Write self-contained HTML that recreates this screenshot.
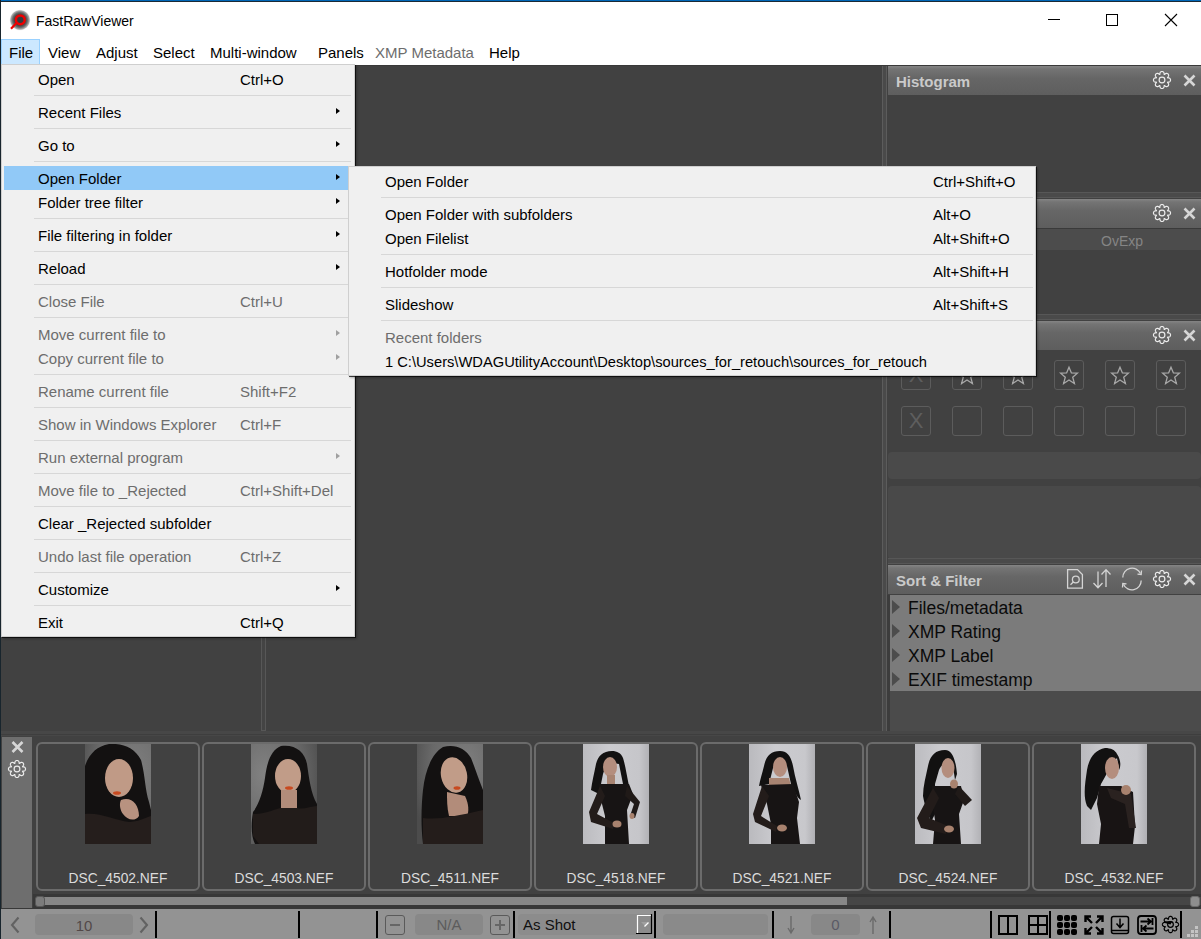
<!DOCTYPE html>
<html><head><meta charset="utf-8">
<style>
*{margin:0;padding:0;box-sizing:border-box}
html,body{width:1201px;height:939px;overflow:hidden;background:#fff;font-family:"Liberation Sans",sans-serif}
.a{position:absolute}
.t{position:absolute;white-space:pre}
#menu .r,#sub .r{position:absolute;margin-top:1px;height:24px;line-height:24px;font-size:15px;color:#000;white-space:pre}
#menu .d,#sub .d{color:#6d6d6d}
.sep{position:absolute;height:1px;background:#d7d7d7}
.arr{position:absolute;width:0;height:0;border-top:3.5px solid transparent;border-bottom:3.5px solid transparent;border-left:4px solid #000}
.arr.d{border-left-color:#a0a0a0}
.hdr{position:absolute;left:888px;width:313px;height:29px;background:linear-gradient(#858585 0,#747474 3px,#666 12px,#5e5e5e 29px)}
.hdr .ti{position:absolute;left:8px;top:1px;line-height:29px;font-size:15px;font-weight:bold;color:#cacaca}
.spl{position:absolute;left:888px;width:313px;height:6px;background:#4a4a4a;border-top:1px solid #575757;border-bottom:1px solid #575757}
.box{position:absolute;width:30px;height:30px;border:1px solid #5c5c5c;border-radius:3px}
.card{position:absolute;top:742px;width:164px;height:149px;border:2px solid #6b6b6b;border-radius:6px;background:#414141}
.card .nm{position:absolute;left:0;width:160px;top:126px;text-align:center;font-size:13.8px;color:#dcdcdc;line-height:18px}
.card svg{position:absolute;left:47px;top:0}
.vb{position:absolute;top:911px;width:3px;height:26px;background:#000}
.fld{position:absolute;height:21px;top:914px;background:#888;border-radius:4px}
</style></head><body>
<!-- window border -->
<div class="a" style="left:0;top:0;width:1201px;height:1px;background:#0067b8"></div>
<div class="a" style="left:0;top:1px;width:1201px;height:1px;background:#1b2a35"></div>
<div class="a" style="left:0;top:0;width:1px;height:939px;background:#18252d"></div>

<!-- title icon -->
<svg class="a" style="left:9px;top:9px" width="22" height="22" viewBox="0 0 22 22">
<defs><radialGradient id="ig" cx="50%" cy="50%" r="50%"><stop offset="0" stop-color="#2e3a42"/><stop offset="0.5" stop-color="#3c3c3c"/><stop offset="0.72" stop-color="#6a6a6a"/><stop offset="0.9" stop-color="#acacac"/><stop offset="1" stop-color="#d8d8d8" stop-opacity="0.5"/></radialGradient></defs>
<circle cx="11" cy="11" r="10.3" fill="url(#ig)"/>
<circle cx="11.3" cy="10.8" r="4.4" fill="none" stroke="#f00000" stroke-width="2.5"/>
<path d="M7.2 14.2 L2 19.8" stroke="#f00000" stroke-width="2.2"/>
</svg>
<div class="t" style="left:36px;top:11px;font-size:14px;line-height:20px;color:#000">FastRawViewer</div>
<!-- window buttons -->
<div class="a" style="left:1048px;top:19px;width:12px;height:1px;background:#000"></div>
<div class="a" style="left:1106px;top:14px;width:12px;height:12px;border:1px solid #000"></div>
<svg class="a" style="left:1164px;top:13px" width="14" height="14" viewBox="0 0 14 14"><path d="M1 1 L13 13 M13 1 L1 13" stroke="#000" stroke-width="1.1"/></svg>

<!-- menubar -->
<div class="a" style="left:1px;top:39px;width:39px;height:26px;background:#cce8ff;border:1px solid #99d1ff"></div>
<div class="t" style="left:9px;top:41px;font-size:15px;line-height:24px;color:#000">File</div>
<div class="t" style="left:48px;top:41px;font-size:15px;line-height:24px;color:#000">View</div>
<div class="t" style="left:96px;top:41px;font-size:15px;line-height:24px;color:#000">Adjust</div>
<div class="t" style="left:153px;top:41px;font-size:15px;line-height:24px;color:#000">Select</div>
<div class="t" style="left:210px;top:41px;font-size:15px;line-height:24px;color:#000">Multi-window</div>
<div class="t" style="left:318px;top:41px;font-size:15px;line-height:24px;color:#000">Panels</div>
<div class="t" style="left:375px;top:41px;font-size:15px;line-height:24px;color:#6d6d6d">XMP Metadata</div>
<div class="t" style="left:489px;top:41px;font-size:15px;line-height:24px;color:#000">Help</div>

<!-- dark main area -->
<div class="a" style="left:1px;top:65px;width:1200px;height:874px;background:#414141"></div>
<div class="a" style="left:1px;top:65px;width:1200px;height:1px;background:#393939"></div>

<!-- left divider -->
<div class="a" style="left:261px;top:66px;width:5px;height:665px;border:1px solid #575757;background:#444"></div>
<!-- right divider -->
<div class="a" style="left:882px;top:66px;width:5px;height:665px;border-left:1px solid #5c5c5c;border-right:1px solid #5c5c5c;background:#4a4a4a"></div>

<!-- right panels -->
<div id="rp">
<div class="hdr" style="top:66px"><div class="ti">Histogram</div></div>
<div class="spl" style="top:192px"></div>
<div class="hdr" style="top:199px"></div>
<div class="a" style="left:888px;top:228px;width:313px;height:22px;background:#4c4c4c"></div>
<div class="a" style="left:888px;top:228px;width:313px;height:1px;background:#3a3a3a"></div>
<div class="t" style="left:1101px;top:231px;font-size:14px;line-height:20px;color:#858585">OvExp</div>
<div class="spl" style="top:314px"></div>
<div class="hdr" style="top:321px"></div>
</div>

<!-- gear icons / close in headers -->
<svg width="0" height="0" style="position:absolute">
<defs>
<g id="gear"><path d="M0.00 -8.55 L0.45 -8.50 L0.88 -8.36 L1.28 -8.11 L1.65 -7.75 L1.94 -7.25 L2.10 -6.46 L2.15 -5.60 L2.44 -5.48 L3.09 -6.05 L3.75 -6.50 L4.32 -6.65 L4.83 -6.64 L5.29 -6.53 L5.70 -6.33 L6.05 -6.05 L6.33 -5.70 L6.53 -5.29 L6.64 -4.83 L6.65 -4.32 L6.50 -3.75 L6.05 -3.09 L5.48 -2.44 L5.60 -2.15 L6.46 -2.10 L7.25 -1.94 L7.75 -1.65 L8.11 -1.28 L8.36 -0.88 L8.50 -0.45 L8.55 -0.00 L8.50 0.45 L8.36 0.88 L8.11 1.28 L7.75 1.65 L7.25 1.94 L6.46 2.10 L5.60 2.15 L5.48 2.44 L6.05 3.09 L6.50 3.75 L6.65 4.32 L6.64 4.83 L6.53 5.29 L6.33 5.70 L6.05 6.05 L5.70 6.33 L5.29 6.53 L4.83 6.64 L4.32 6.65 L3.75 6.50 L3.09 6.05 L2.44 5.48 L2.15 5.60 L2.10 6.46 L1.94 7.25 L1.65 7.75 L1.28 8.11 L0.88 8.36 L0.45 8.50 L0.00 8.55 L-0.45 8.50 L-0.88 8.36 L-1.28 8.11 L-1.65 7.75 L-1.94 7.25 L-2.10 6.46 L-2.15 5.60 L-2.44 5.48 L-3.09 6.05 L-3.75 6.50 L-4.32 6.65 L-4.83 6.64 L-5.29 6.53 L-5.70 6.33 L-6.05 6.05 L-6.33 5.70 L-6.53 5.29 L-6.64 4.83 L-6.65 4.32 L-6.50 3.75 L-6.05 3.09 L-5.48 2.44 L-5.60 2.15 L-6.46 2.10 L-7.25 1.94 L-7.75 1.65 L-8.11 1.28 L-8.36 0.88 L-8.50 0.45 L-8.55 0.00 L-8.50 -0.45 L-8.36 -0.88 L-8.11 -1.28 L-7.75 -1.65 L-7.25 -1.94 L-6.46 -2.10 L-5.60 -2.15 L-5.48 -2.44 L-6.05 -3.09 L-6.50 -3.75 L-6.65 -4.32 L-6.64 -4.83 L-6.53 -5.29 L-6.33 -5.70 L-6.05 -6.05 L-5.70 -6.33 L-5.29 -6.53 L-4.83 -6.64 L-4.32 -6.65 L-3.75 -6.50 L-3.09 -6.05 L-2.44 -5.48 L-2.15 -5.60 L-2.10 -6.46 L-1.94 -7.25 L-1.65 -7.75 L-1.28 -8.11 L-0.88 -8.36 L-0.45 -8.50Z" fill="none" stroke="#ececec" stroke-width="1.15" stroke-linejoin="round"/><circle r="2.9" fill="none" stroke="#ececec" stroke-width="1.15"/></g>
<g id="cls"><path d="M-5 -5 L5 5 M5 -5 L-5 5" stroke="#d6d6d6" stroke-width="2.6"/></g>
<g id="star"><path transform="translate(0.5 1) scale(0.93)" d="M0 -9.5 L2.6 -3.3 L9 -3.1 L4 1.3 L5.8 8 L0 4.3 L-5.8 8 L-4 1.3 L-9 -3.1 L-2.6 -3.3 Z" fill="none" stroke="#a8a8a8" stroke-width="1.4" stroke-linejoin="miter"/></g>
</defs></svg>
<svg class="a" style="left:0;top:0" width="1201" height="939" viewBox="0 0 1201 939">
<use href="#gear" x="1162" y="80"/><use href="#cls" x="1189.5" y="80.5"/>
<use href="#gear" x="1162" y="213"/><use href="#cls" x="1189.5" y="213.5"/>
<use href="#gear" x="1162" y="335"/><use href="#cls" x="1189.5" y="335.5"/>
</svg>

<!-- rating boxes -->
<div class="box" style="left:901px;top:360px"></div>
<div class="box" style="left:952px;top:360px"></div>
<div class="box" style="left:1003px;top:360px"></div>
<div class="box" style="left:1054px;top:360px"></div>
<div class="box" style="left:1105px;top:360px"></div>
<div class="box" style="left:1156px;top:360px"></div>
<div class="box" style="left:901px;top:406px"></div>
<div class="box" style="left:952px;top:406px"></div>
<div class="box" style="left:1003px;top:406px"></div>
<div class="box" style="left:1054px;top:406px"></div>
<div class="box" style="left:1105px;top:406px"></div>
<div class="box" style="left:1156px;top:406px"></div>
<div class="t" style="left:905px;top:406px;width:22px;text-align:center;font-size:22px;line-height:30px;color:#5e5e5e">X</div>
<div class="t" style="left:905px;top:360px;width:22px;text-align:center;font-size:22px;line-height:30px;color:#5e5e5e">X</div>
<svg class="a" style="left:0;top:0" width="1201" height="939" viewBox="0 0 1201 939">
<use href="#star" x="966.5" y="375"/><use href="#star" x="1017.5" y="375"/><use href="#star" x="1068.5" y="375"/><use href="#star" x="1119.5" y="375"/><use href="#star" x="1170.5" y="375"/>
</svg>
<div class="a" style="left:888px;top:452px;width:313px;height:27px;background:#4a4a4a;border-radius:4px"></div>
<div class="a" style="left:888px;top:486px;width:313px;height:73px;background:#494949;border-radius:4px"></div>
<div class="spl" style="top:558px"></div>
<div class="hdr" style="top:565px"><div class="ti">Sort &amp; Filter</div></div>
<div class="a" style="left:887px;top:595px;width:3px;height:136px;background:#3c3c3c"></div>
<div class="a" style="left:890px;top:595px;width:311px;height:96px;background:#7b7b7b"></div>
<div class="a" style="left:890px;top:691px;width:311px;height:40px;background:#4b4b4b"></div>


<!-- sort & filter icons and tree -->
<svg class="a" style="left:0;top:0" width="1201" height="939" viewBox="0 0 1201 939">
<g fill="none" stroke="#d4d4d4" stroke-width="1.3">
<path d="M1067.6 569.6 L1077.5 569.6 L1082.4 574.5 L1082.4 588.1 L1067.6 588.1 Z"/>
<circle cx="1075.8" cy="579.5" r="3.4"/><path d="M1073.3 582 L1070.5 584.8"/>
<path d="M1098 571.5 L1098 587.5 M1093.5 583 L1098 587.8 L1102.5 583"/>
<path d="M1106 587 L1106 569.8 M1101.5 574.5 L1106 569.6 L1110.5 574.5"/>
<path d="M1140.5 573.5 A9.3 9.3 0 0 0 1122.8 577.5"/><path d="M1123.5 584.5 A9.3 9.3 0 0 0 1141.2 580.5"/>
<path d="M1141.5 570.5 L1141.2 574.5 L1137.5 574.2"/><path d="M1122.5 587.5 L1122.8 583.5 L1126.5 583.8"/>
</g>
<use href="#gear" x="1162" y="579"/><use href="#cls" x="1189.5" y="579.5"/>
<g fill="#4c4c4c">
<path d="M892 600 L900 607 L892 614Z"/><path d="M892 624 L900 631 L892 638Z"/><path d="M892 648 L900 655 L892 662Z"/><path d="M892 672 L900 679 L892 686Z"/>
</g>
</svg>
<div class="t" style="left:908px;top:596px;font-size:17.5px;line-height:24px;color:#0a0a0a">Files/metadata</div>
<div class="t" style="left:908px;top:620px;font-size:17.5px;line-height:24px;color:#0a0a0a">XMP Rating</div>
<div class="t" style="left:908px;top:644px;font-size:17.5px;line-height:24px;color:#0a0a0a">XMP Label</div>
<div class="t" style="left:908px;top:668px;font-size:17.5px;line-height:24px;color:#0a0a0a">EXIF timestamp</div>

<!-- horizontal splitter -->
<div class="a" style="left:1px;top:731px;width:1200px;height:5px;background:#474747"></div>
<div class="a" style="left:1px;top:734px;width:1200px;height:1px;background:#3e3e3e"></div>

<!-- filmstrip left toolbar -->
<div class="a" style="left:2px;top:737px;width:30px;height:171px;background:#6e6e6e"></div>
<svg class="a" style="left:0;top:730px" width="40" height="60" viewBox="0 730 40 60"><use href="#cls" x="17.5" y="747"/><use href="#gear" x="17" y="769"/></svg>


<!-- cards -->
<div class="card" style="left:36px"><svg width="66" height="100" viewBox="0 0 66 100"><defs><radialGradient id="pg1" cx="0.75" cy="0.25" r="0.9"><stop offset="0" stop-color="#7e7e7e"/><stop offset="0.6" stop-color="#6c6c6c"/><stop offset="1" stop-color="#4c4c4c"/></radialGradient></defs>
<rect width="66" height="100" fill="url(#pg1)"/>
<path d="M24 0 C38 -1 50 4 56 16 C60 30 60 46 64 58 L66 66 L66 100 L0 100 L0 22 C4 10 12 2 24 0Z" fill="#131111"/>
<ellipse cx="34" cy="34" rx="14" ry="19" fill="#c09a86"/>
<path d="M36 56 C46 52 54 60 54 72 C50 78 42 76 38 70 C35 66 34 60 36 56Z" fill="#b89280"/>
<path d="M0 70 C14 68 30 76 44 78 C52 78 60 74 66 72 L66 100 L0 100Z" fill="#251e1c"/>
<ellipse cx="32" cy="49" rx="4" ry="1.8" fill="#c84a20"/></svg><div class="nm">DSC_4502.NEF</div></div>
<div class="card" style="left:202px"><svg width="66" height="100" viewBox="0 0 66 100"><defs><radialGradient id="pg2" cx="0.2" cy="0.3" r="0.9"><stop offset="0" stop-color="#828282"/><stop offset="0.6" stop-color="#6a6a6a"/><stop offset="1" stop-color="#4e4e4e"/></radialGradient></defs>
<rect width="66" height="100" fill="url(#pg2)"/>
<path d="M30 2 C44 0 54 8 56 20 C58 34 60 50 66 60 L66 100 L4 100 C0 92 0 80 2 68 C8 60 12 48 14 34 C16 18 20 6 30 2Z" fill="#131111"/>
<ellipse cx="37" cy="32" rx="13" ry="17" fill="#c19c88"/>
<rect x="30" y="46" width="16" height="20" fill="#b28c7a"/>
<path d="M2 70 C16 70 26 64 30 64 L46 64 C52 66 60 62 66 62 L66 100 L8 100 L2 92Z" fill="#221c1a"/>
<ellipse cx="38" cy="44" rx="4" ry="1.8" fill="#c84a20"/></svg><div class="nm">DSC_4503.NEF</div></div>
<div class="card" style="left:368px"><svg width="66" height="100" viewBox="0 0 66 100"><defs><radialGradient id="pg3" cx="0.75" cy="0.2" r="0.9"><stop offset="0" stop-color="#7e7e7e"/><stop offset="0.6" stop-color="#686868"/><stop offset="1" stop-color="#4c4c4c"/></radialGradient></defs>
<rect width="66" height="100" fill="url(#pg3)"/>
<path d="M26 3 C38 0 48 4 54 14 C58 24 62 36 66 46 L66 100 L6 100 C4 84 4 64 6 46 C8 28 14 10 26 3Z" fill="#131111"/>
<ellipse cx="37" cy="31" rx="13" ry="18" fill="#c19c88" transform="rotate(-12 37 31)"/>
<path d="M30 48 L48 52 C52 60 52 68 50 72 L32 72 C30 64 30 56 30 48Z" fill="#b28c7a"/>
<path d="M6 74 C22 76 40 72 66 66 L66 100 L6 100Z" fill="#241d1b"/>
<ellipse cx="40" cy="44" rx="3.5" ry="1.8" fill="#c84a20"/></svg><div class="nm">DSC_4511.NEF</div></div>
<div class="card" style="left:534px"><svg width="66" height="100" viewBox="0 0 66 100"><defs><linearGradient id="fg" x1="0" y1="0" x2="1" y2="0"><stop offset="0" stop-color="#bcbcc0"/><stop offset="0.4" stop-color="#cbcbcf"/><stop offset="0.85" stop-color="#c6c6ca"/><stop offset="1" stop-color="#b2b2b6"/></linearGradient></defs>
<rect width="66" height="100" fill="url(#fg)"/>
<path d="M29 7 C20 7 15 12 13 20 C11 30 9 38 8 46 L16 50 L20 30 C22 22 30 18 36 20 L40 40 L46 42 C44 32 42 20 40 14 C38 9 34 7 29 7Z" fill="#121111"/>
<ellipse cx="27" cy="23" rx="7" ry="10" fill="#b48e7e"/>
<rect x="24" y="31" width="8" height="9" fill="#a88472"/>
<path d="M16 40 L46 40 L50 50 L44 66 L46 100 L22 100 L22 72 L18 56Z" fill="#171414"/>
<path d="M17 42 L6 68 L8 78 L30 85 L31 79 L14 70 L22 52Z" fill="#231c1a"/>
<path d="M44 42 L57 58 L52 74 L47 72 L51 60 L42 52Z" fill="#201a18"/>
<ellipse cx="34" cy="80" rx="4.5" ry="3.5" fill="#a8826e"/><ellipse cx="49" cy="72" rx="2.5" ry="3" fill="#a8826e"/></svg><div class="nm">DSC_4518.NEF</div></div>
<div class="card" style="left:700px"><svg width="66" height="100" viewBox="0 0 66 100"><defs><linearGradient id="fg5" x1="0" y1="0" x2="1" y2="0"><stop offset="0" stop-color="#bababe"/><stop offset="0.4" stop-color="#cbcbcf"/><stop offset="0.85" stop-color="#c8c8cc"/><stop offset="1" stop-color="#b0b0b4"/></linearGradient></defs>
<rect width="66" height="100" fill="url(#fg5)"/>
<path d="M31 7 C22 7 17 12 15 22 C13 30 11 36 10 42 L20 40 L24 24 C28 18 34 18 38 22 L42 40 C46 48 48 54 52 56 C50 46 46 34 44 22 C42 12 38 7 31 7Z" fill="#121111"/>
<ellipse cx="31" cy="23" rx="7" ry="10" fill="#b48e7e"/>
<path d="M20 34 L40 34 L42 42 L20 42Z" fill="#a88472"/>
<path d="M12 41 L44 40 L50 58 L48 74 L51 100 L22 100 L22 80 L18 60Z" fill="#171414"/>
<path d="M13 42 L4 70 L6 78 L27 88 L28 82 L12 72 L20 52Z" fill="#231c1a"/>
<ellipse cx="33" cy="84" rx="5" ry="3.5" fill="#a8826e"/></svg><div class="nm">DSC_4521.NEF</div></div>
<div class="card" style="left:866px"><svg width="66" height="100" viewBox="0 0 66 100"><rect width="66" height="100" fill="url(#fg)"/>
<path d="M30 6 C20 6 15 12 13 22 C11 32 8 42 8 52 C10 64 14 72 16 78 L20 70 L20 40 L24 26 C28 18 34 18 38 22 L40 36 L42 30 C41 18 38 6 30 6Z" fill="#121111"/>
<ellipse cx="33" cy="24" rx="6.5" ry="10" fill="#b48e7e"/>
<path d="M17 42 L46 42 L49 56 L44 70 L46 100 L18 100 L20 76 L17 56Z" fill="#171414"/>
<path d="M18 44 L2 74 L6 84 L31 90 L33 82 L14 74 L24 54Z" fill="#231c1a"/>
<path d="M44 42 L57 56 L50 62 L40 50Z" fill="#201a18"/>
<ellipse cx="39" cy="40" rx="4" ry="4.5" fill="#a8826e"/><ellipse cx="34" cy="85" rx="5" ry="3.5" fill="#a8826e"/></svg><div class="nm">DSC_4524.NEF</div></div>
<div class="card" style="left:1032px"><svg width="66" height="100" viewBox="0 0 66 100"><rect width="66" height="100" fill="url(#fg5)"/>
<path d="M24 4 C14 6 8 14 6 26 C4 40 2 52 6 62 L10 66 L16 54 L20 40 C26 30 30 20 36 14 L38 26 C40 22 40 16 36 10 C34 6 30 4 24 4Z" fill="#121111"/>
<ellipse cx="31" cy="24" rx="7" ry="11" fill="#b48e7e"/>
<path d="M18 42 L40 42 L52 48 L54 82 L52 100 L18 100 L20 80 L16 60Z" fill="#181414"/>
<path d="M26 44 L50 50 L55 84 L48 84 L44 60 L30 54Z" fill="#2a2220"/>
<ellipse cx="45" cy="46" rx="5" ry="5" fill="#a8826e"/></svg><div class="nm">DSC_4532.NEF</div></div>
<!-- scrollbar -->
<div class="a" style="left:33px;top:894px;width:1168px;height:15px;background:#383838"></div>
<div class="a" style="left:44px;top:897px;width:803px;height:8px;background:#878787"></div>
<div class="a" style="left:847px;top:897px;width:354px;height:8px;background:#464646"></div>
<div class="a" style="left:35px;top:896px;width:10px;height:11px;background:#7c7c7c;border:1px solid #585858;border-radius:3px"></div>
<div class="a" style="left:1190px;top:896px;width:10px;height:11px;background:#8e8e8e;border:1px solid #6c6c6c;border-radius:3px"></div>

<!-- status bar -->
<div class="a" style="left:1px;top:909px;width:1200px;height:30px;background:#939393"></div>


<!-- status bar contents -->
<svg class="a" style="left:0;top:905px" width="1201" height="34" viewBox="0 905 1201 34">
<rect x="1" y="908" width="32" height="1" fill="#383838"/>
<path d="M18.5 917.5 L12 925 L18.5 932.5" fill="none" stroke="#626262" stroke-width="2.1"/>
<rect x="35" y="914" width="98" height="21" rx="4" fill="#888888"/>
<path d="M140.5 917.5 L147 925 L140.5 932.5" fill="none" stroke="#626262" stroke-width="2.1"/>
<g fill="#000">
<rect x="155" y="911" width="2" height="27"/><rect x="298" y="911" width="2" height="27"/><rect x="376" y="911" width="2" height="27"/><rect x="513" y="911" width="2" height="27"/>
<rect x="654" y="911" width="2" height="27"/><rect x="772" y="911" width="2" height="27"/><rect x="889" y="911" width="2" height="27"/>
<rect x="990" y="911" width="2" height="27"/><rect x="1049" y="911" width="2" height="27"/><rect x="1180" y="911" width="2" height="27"/>
</g>
<rect x="385.5" y="915.5" width="19" height="19" rx="2.5" fill="none" stroke="#5a5a5a" stroke-width="1"/>
<rect x="390" y="924" width="10" height="2" fill="#666"/>
<rect x="415" y="914" width="68" height="21" rx="4" fill="#888888"/>
<rect x="490.5" y="915.5" width="19" height="19" rx="2.5" fill="none" stroke="#5a5a5a" stroke-width="1"/>
<rect x="495" y="924" width="10" height="2" fill="#666"/><rect x="499" y="920" width="2" height="10" fill="#666"/>
<rect x="518" y="914" width="134" height="21" rx="4" fill="#8c8c8c"/>
<path d="M637.5 933 L637.5 915.5 L651 915.5" fill="none" stroke="#fff" stroke-width="1.2"/>
<path d="M636 933.5 L651.5 933.5 L651.5 914" fill="none" stroke="#000" stroke-width="1.2"/>
<path d="M641 922 L648 922 L645 926Z" fill="#a0a0a0"/><path d="M644.5 926.5 L648.5 922.5" stroke="#fff" stroke-width="1.3"/>
<rect x="663" y="914" width="105" height="21" rx="4" fill="#8a8a8a"/>
<path d="M791 916 L791 932 M788 928 L791 933 L794 928" fill="none" stroke="#6a6a6a" stroke-width="1.4"/>
<rect x="811" y="914" width="49" height="21" rx="4" fill="#888888"/>
<path d="M873 934 L873 918 M870 922 L873 917 L876 922" fill="none" stroke="#6a6a6a" stroke-width="1.4"/>
<!-- right icons -->
<g fill="none" stroke="#000" stroke-width="2">
<rect x="999" y="916" width="18" height="18"/><path d="M1008 916 L1008 934"/>
<rect x="1029" y="916" width="18" height="18"/><path d="M1038 916 L1038 934 M1029 925 L1047 925"/>
</g>
<g fill="#000">
<rect x="1057" y="915" width="6" height="6" rx="2"/><rect x="1064" y="915" width="6" height="6" rx="2"/><rect x="1071" y="915" width="6" height="6" rx="2"/>
<rect x="1057" y="922" width="6" height="6" rx="2"/><rect x="1064" y="922" width="6" height="6" rx="2"/><rect x="1071" y="922" width="6" height="6" rx="2"/>
<rect x="1057" y="929" width="6" height="6" rx="2"/><rect x="1064" y="929" width="6" height="6" rx="2"/><rect x="1071" y="929" width="6" height="6" rx="2"/>
</g>
<g fill="none" stroke="#000" stroke-width="2.4">
<path d="M1086 917 L1092 923 M1085.5 922 L1085.5 916.5 L1091 916.5"/>
<path d="M1102 917 L1096 923 M1102.5 922 L1102.5 916.5 L1097 916.5"/>
<path d="M1086 933 L1092 927 M1085.5 928 L1085.5 933.5 L1091 933.5"/>
<path d="M1102 933 L1096 927 M1102.5 928 L1102.5 933.5 L1097 933.5"/>
</g>
<g fill="none" stroke="#000" stroke-width="1.5">
<rect x="1111.5" y="916.5" width="17" height="17" rx="2"/>
<path d="M1111.5 930.5 L1128.5 930.5"/>
<path d="M1120 918.5 L1120 927 M1116.5 923.5 L1120 927.5 L1123.5 923.5"/>
</g>
<g fill="none" stroke="#000" stroke-width="1.8">
<rect x="1138" y="916" width="18" height="18" rx="3"/>
<path d="M1140.5 921.5 L1151 921.5 M1147.5 918.5 L1151 921.5 L1147.5 924.5 M1152.5 918 L1152.5 925"/>
<path d="M1153.5 928.5 L1143 928.5 M1146.5 925.5 L1143 928.5 L1146.5 931.5 M1141.5 925 L1141.5 932"/>
</g>
<g transform="translate(1170.5 924.5) scale(0.95)"><path d="M0.00 -8.55 L0.45 -8.50 L0.88 -8.36 L1.28 -8.11 L1.65 -7.75 L1.94 -7.25 L2.10 -6.46 L2.15 -5.60 L2.44 -5.48 L3.09 -6.05 L3.75 -6.50 L4.32 -6.65 L4.83 -6.64 L5.29 -6.53 L5.70 -6.33 L6.05 -6.05 L6.33 -5.70 L6.53 -5.29 L6.64 -4.83 L6.65 -4.32 L6.50 -3.75 L6.05 -3.09 L5.48 -2.44 L5.60 -2.15 L6.46 -2.10 L7.25 -1.94 L7.75 -1.65 L8.11 -1.28 L8.36 -0.88 L8.50 -0.45 L8.55 -0.00 L8.50 0.45 L8.36 0.88 L8.11 1.28 L7.75 1.65 L7.25 1.94 L6.46 2.10 L5.60 2.15 L5.48 2.44 L6.05 3.09 L6.50 3.75 L6.65 4.32 L6.64 4.83 L6.53 5.29 L6.33 5.70 L6.05 6.05 L5.70 6.33 L5.29 6.53 L4.83 6.64 L4.32 6.65 L3.75 6.50 L3.09 6.05 L2.44 5.48 L2.15 5.60 L2.10 6.46 L1.94 7.25 L1.65 7.75 L1.28 8.11 L0.88 8.36 L0.45 8.50 L0.00 8.55 L-0.45 8.50 L-0.88 8.36 L-1.28 8.11 L-1.65 7.75 L-1.94 7.25 L-2.10 6.46 L-2.15 5.60 L-2.44 5.48 L-3.09 6.05 L-3.75 6.50 L-4.32 6.65 L-4.83 6.64 L-5.29 6.53 L-5.70 6.33 L-6.05 6.05 L-6.33 5.70 L-6.53 5.29 L-6.64 4.83 L-6.65 4.32 L-6.50 3.75 L-6.05 3.09 L-5.48 2.44 L-5.60 2.15 L-6.46 2.10 L-7.25 1.94 L-7.75 1.65 L-8.11 1.28 L-8.36 0.88 L-8.50 0.45 L-8.55 0.00 L-8.50 -0.45 L-8.36 -0.88 L-8.11 -1.28 L-7.75 -1.65 L-7.25 -1.94 L-6.46 -2.10 L-5.60 -2.15 L-5.48 -2.44 L-6.05 -3.09 L-6.50 -3.75 L-6.65 -4.32 L-6.64 -4.83 L-6.53 -5.29 L-6.33 -5.70 L-6.05 -6.05 L-5.70 -6.33 L-5.29 -6.53 L-4.83 -6.64 L-4.32 -6.65 L-3.75 -6.50 L-3.09 -6.05 L-2.44 -5.48 L-2.15 -5.60 L-2.10 -6.46 L-1.94 -7.25 L-1.65 -7.75 L-1.28 -8.11 L-0.88 -8.36 L-0.45 -8.50Z" fill="none" stroke="#000" stroke-width="1.2"/><circle r="3" fill="none" stroke="#000" stroke-width="1.3"/><path d="M-7 -3.5 L2 -3.5 L0 0 L-6 -1.5Z" fill="#000"/></g>
<g fill="#c4c4c4">
<rect x="1195" y="926" width="3" height="3"/><rect x="1191" y="930" width="3" height="3"/><rect x="1195" y="930" width="3" height="3"/>
<rect x="1187" y="934" width="3" height="3"/><rect x="1191" y="934" width="3" height="3"/><rect x="1195" y="934" width="3" height="3"/>
</g>
</svg>
<div class="t" style="left:35px;top:916px;width:98px;text-align:center;font-size:15px;line-height:20px;color:#524848">10</div>
<div class="t" style="left:415px;top:915px;width:68px;text-align:center;font-size:15px;line-height:20px;color:#5c5c5c">N/A</div>
<div class="t" style="left:523px;top:915px;font-size:15px;line-height:20px;color:#101010">As Shot</div>
<div class="t" style="left:811px;top:915px;width:49px;text-align:center;font-size:15px;line-height:20px;color:#5a5a66">0</div>

<!-- menus -->
<div id="menu" class="a" style="left:1px;top:64px;width:354px;height:573px;background:#f0f0f0;box-shadow:inset 0 0 0 1px #cfcfcf,1px 1px 0 rgba(0,0,0,0.7),2px 2px 2px rgba(0,0,0,0.25)"><div class="r" style="left:37px;top:3px">Open</div>
<div class="r" style="left:239px;top:3px">Ctrl+O</div>
<div class="sep" style="left:33px;top:31px;width:317px"></div>
<div class="r" style="left:37px;top:36px">Recent Files</div>
<div class="arr" style="left:335px;top:44px"></div>
<div class="sep" style="left:33px;top:64px;width:317px"></div>
<div class="r" style="left:37px;top:69px">Go to</div>
<div class="arr" style="left:335px;top:77px"></div>
<div class="sep" style="left:33px;top:97px;width:317px"></div>
<div class="a" style="left:3px;top:102px;width:350px;height:24px;background:#91c9f7"></div>
<div class="r" style="left:37px;top:102px">Open Folder</div>
<div class="arr" style="left:335px;top:110px"></div>
<div class="r" style="left:37px;top:126px">Folder tree filter</div>
<div class="arr" style="left:335px;top:134px"></div>
<div class="sep" style="left:33px;top:154px;width:317px"></div>
<div class="r" style="left:37px;top:159px">File filtering in folder</div>
<div class="arr" style="left:335px;top:167px"></div>
<div class="sep" style="left:33px;top:187px;width:317px"></div>
<div class="r" style="left:37px;top:192px">Reload</div>
<div class="arr" style="left:335px;top:200px"></div>
<div class="sep" style="left:33px;top:220px;width:317px"></div>
<div class="r d" style="left:37px;top:225px">Close File</div>
<div class="r d" style="left:239px;top:225px">Ctrl+U</div>
<div class="sep" style="left:33px;top:253px;width:317px"></div>
<div class="r d" style="left:37px;top:258px">Move current file to</div>
<div class="arr d" style="left:335px;top:266px"></div>
<div class="r d" style="left:37px;top:282px">Copy current file to</div>
<div class="arr d" style="left:335px;top:290px"></div>
<div class="sep" style="left:33px;top:310px;width:317px"></div>
<div class="r d" style="left:37px;top:315px">Rename current file</div>
<div class="r d" style="left:239px;top:315px">Shift+F2</div>
<div class="sep" style="left:33px;top:343px;width:317px"></div>
<div class="r d" style="left:37px;top:348px">Show in Windows Explorer</div>
<div class="r d" style="left:239px;top:348px">Ctrl+F</div>
<div class="sep" style="left:33px;top:376px;width:317px"></div>
<div class="r d" style="left:37px;top:381px">Run external program</div>
<div class="arr d" style="left:335px;top:389px"></div>
<div class="sep" style="left:33px;top:409px;width:317px"></div>
<div class="r d" style="left:37px;top:414px">Move file to _Rejected</div>
<div class="r d" style="left:239px;top:414px">Ctrl+Shift+Del</div>
<div class="sep" style="left:33px;top:442px;width:317px"></div>
<div class="r" style="left:37px;top:447px">Clear _Rejected subfolder</div>
<div class="sep" style="left:33px;top:475px;width:317px"></div>
<div class="r d" style="left:37px;top:480px">Undo last file operation</div>
<div class="r d" style="left:239px;top:480px">Ctrl+Z</div>
<div class="sep" style="left:33px;top:508px;width:317px"></div>
<div class="r" style="left:37px;top:513px">Customize</div>
<div class="arr" style="left:335px;top:521px"></div>
<div class="sep" style="left:33px;top:541px;width:317px"></div>
<div class="r" style="left:37px;top:546px">Exit</div>
<div class="r" style="left:239px;top:546px">Ctrl+Q</div></div>
<div id="sub" class="a" style="left:348px;top:166px;width:688px;height:210px;background:#f0f0f0;box-shadow:inset 0 0 0 1px #cfcfcf,1px 1px 0 rgba(0,0,0,0.7),2px 2px 2px rgba(0,0,0,0.25)"><div class="r" style="left:37px;top:3px">Open Folder</div>
<div class="r" style="left:585px;top:3px">Ctrl+Shift+O</div>
<div class="sep" style="left:33px;top:31px;width:652px"></div>
<div class="r" style="left:37px;top:36px">Open Folder with subfolders</div>
<div class="r" style="left:585px;top:36px">Alt+O</div>
<div class="r" style="left:37px;top:60px">Open Filelist</div>
<div class="r" style="left:585px;top:60px">Alt+Shift+O</div>
<div class="sep" style="left:33px;top:88px;width:652px"></div>
<div class="r" style="left:37px;top:93px">Hotfolder mode</div>
<div class="r" style="left:585px;top:93px">Alt+Shift+H</div>
<div class="sep" style="left:33px;top:121px;width:652px"></div>
<div class="r" style="left:37px;top:126px">Slideshow</div>
<div class="r" style="left:585px;top:126px">Alt+Shift+S</div>
<div class="sep" style="left:33px;top:154px;width:652px"></div>
<div class="r d" style="left:37px;top:159px">Recent folders</div>
<div class="r" style="left:37px;top:183px;font-size:14.7px">1 C:\Users\WDAGUtilityAccount\Desktop\sources_for_retouch\sources_for_retouch</div></div>
</body></html>
